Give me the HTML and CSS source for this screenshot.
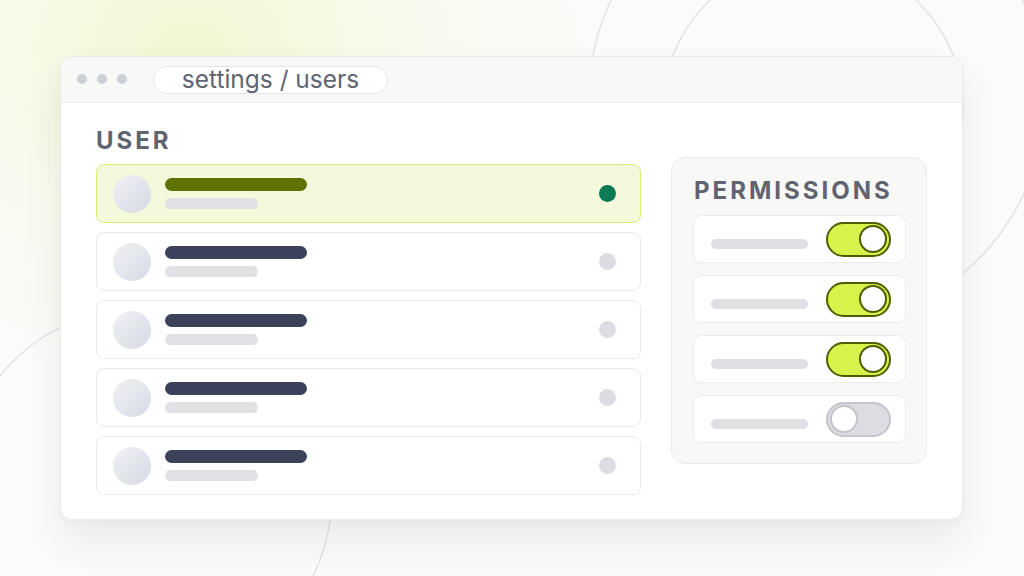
FILE: index.html
```html
<!DOCTYPE html>
<html>
<head>
<meta charset="utf-8">
<link rel="stylesheet" href="styles.css">
</head>
<body>
<svg class="deco" width="1024" height="576" viewBox="0 0 1024 576">
  <circle cx="817" cy="98" r="228" fill="none" stroke="#e3e3e3" stroke-width="1.5"/>
  <circle cx="813" cy="109" r="150" fill="none" stroke="#e3e3e3" stroke-width="1.5"/>
  <circle cx="145" cy="494" r="187" fill="none" stroke="#e3e3e3" stroke-width="1.5"/>
</svg>
<div class="window">
  <div class="titlebar">
    <div class="dots"><span class="dot"></span><span class="dot"></span><span class="dot"></span></div>
    <div class="address">settings / users</div>
  </div>
  <div class="content">
    <section class="users">
      <h2 class="heading">USER</h2>
      <div class="user-list">
        <div class="user-row selected">
          <div class="avatar"></div>
          <div class="lines"><div class="name-bar"></div><div class="sub-bar"></div></div>
          <div class="status"></div>
        </div>
        <div class="user-row">
          <div class="avatar"></div>
          <div class="lines"><div class="name-bar"></div><div class="sub-bar"></div></div>
          <div class="status"></div>
        </div>
        <div class="user-row">
          <div class="avatar"></div>
          <div class="lines"><div class="name-bar"></div><div class="sub-bar"></div></div>
          <div class="status"></div>
        </div>
        <div class="user-row">
          <div class="avatar"></div>
          <div class="lines"><div class="name-bar"></div><div class="sub-bar"></div></div>
          <div class="status"></div>
        </div>
        <div class="user-row">
          <div class="avatar"></div>
          <div class="lines"><div class="name-bar"></div><div class="sub-bar"></div></div>
          <div class="status"></div>
        </div>
      </div>
    </section>
    <section class="permissions">
      <h2 class="heading">PERMISSIONS</h2>
      <div class="perm-list">
        <div class="perm-row"><div class="perm-bar"></div><div class="toggle on"><span class="knob"></span></div></div>
        <div class="perm-row"><div class="perm-bar"></div><div class="toggle on"><span class="knob"></span></div></div>
        <div class="perm-row"><div class="perm-bar"></div><div class="toggle on"><span class="knob"></span></div></div>
        <div class="perm-row"><div class="perm-bar"></div><div class="toggle off"><span class="knob"></span></div></div>
      </div>
    </section>
  </div>
</div>
</body>
</html>
```

FILE: styles.css
```css
* { box-sizing: border-box; }
html, body { margin: 0; padding: 0; }
body {
  width: 1024px;
  height: 576px;
  overflow: hidden;
  position: relative;
  padding: 56px 61px 0 60px;
  font-family: Inter, "Noto Sans", sans-serif;
  background:
    radial-gradient(ellipse 520px 420px at 190px 50px, #f1f8d3 0%, rgba(246,250,232,0.6) 45%, rgba(251,251,251,0) 80%),
    #fbfbfa;
}
.deco {
  position: absolute;
  left: 0;
  top: 0;
  z-index: 0;
}
.window {
  position: relative;
  z-index: 1;
  width: 903px;
  height: 464px;
  background: #ffffff;
  border: 1px solid #ebebea;
  border-radius: 12px;
  box-shadow: 0 22px 40px rgba(40, 40, 30, 0.07), 0 4px 12px rgba(40, 40, 30, 0.03);
  overflow: hidden;
}
.titlebar {
  height: 46px;
  background: #f8f8f6;
  border-bottom: 1px solid #ebebea;
  display: flex;
  align-items: center;
  padding-left: 16px;
}
.dots { display: flex; gap: 10px; margin-right: 26px; margin-top: -2px; }
.dot { width: 10px; height: 10px; border-radius: 50%; background: #cdcfd6; }
.address {
  width: 235px;
  height: 28px;
  border: 1px solid #e6e6e6;
  border-radius: 14px;
  background: #ffffff;
  display: flex;
  align-items: center;
  justify-content: center;
  font-size: 24.5px;
  color: #5f6470;
  line-height: 1;
  padding-bottom: 1px;
}
.content {
  display: grid;
  grid-template-columns: 545px 256px;
  column-gap: 30px;
  align-items: start;
  padding: 24px 35px 0 35px;
}
.heading {
  margin: 0;
  font-size: 24px;
  line-height: 28px;
  font-weight: 700;
  letter-spacing: 3px;
  color: #5f6470;
}
.users .heading { margin-bottom: 9px; }
.user-list { display: flex; flex-direction: column; gap: 9px; }
.user-row {
  height: 59px;
  border: 1px solid #e9e9e9;
  border-radius: 8px;
  background: #ffffff;
  display: flex;
  align-items: center;
  padding: 0 24px 0 16px;
}
.user-row.selected {
  background: #f3f9da;
  border-color: #d6ef76;
}
.avatar {
  width: 38px;
  height: 38px;
  border-radius: 50%;
  background: linear-gradient(135deg, #f0f1f4 0%, #e3e6ec 50%, #d5d9e2 100%);
  flex: none;
}
.lines {
  margin-left: 14px;
  display: flex;
  flex-direction: column;
  gap: 7px;
  flex: 1;
}
.name-bar {
  width: 142px;
  height: 13px;
  border-radius: 7px;
  background: #3b4259;
}
.selected .name-bar { background: #5f7300; }
.sub-bar {
  width: 93px;
  height: 11px;
  border-radius: 6px;
  background: #e0e1e5;
}
.status {
  width: 17px;
  height: 17px;
  border-radius: 50%;
  background: #dcdde2;
  flex: none;
}
.selected .status { background: #0c7a52; }
.permissions {
  margin-top: 30px;
  background: #f8f8f6;
  border: 1px solid #ebebea;
  border-radius: 14px;
  padding: 19px 20px 20px 21px;
}
.permissions .heading { margin-bottom: 10px; margin-left: 1px; }
.perm-list { display: flex; flex-direction: column; gap: 12px; }
.perm-row {
  height: 48px;
  background: #ffffff;
  border: 1px solid #ebebea;
  border-radius: 8px;
  display: flex;
  align-items: center;
  justify-content: space-between;
  padding: 0 14px 0 17px;
}
.perm-bar {
  width: 97px;
  height: 10px;
  border-radius: 5px;
  background: #dfe0e4;
  margin-top: 9px;
}
.toggle {
  width: 65px;
  height: 35px;
  border-radius: 18px;
  border: 2px solid #4f5d00;
  background: #d6f24b;
  display: flex;
  align-items: center;
  padding: 0 2px;
}
.toggle.on { justify-content: flex-end; }
.toggle.off {
  justify-content: flex-start;
  background: #dcdde2;
  border-color: #c3c5cd;
}
.knob {
  width: 28px;
  height: 28px;
  border-radius: 50%;
  background: #ffffff;
  border: 2px solid #4f5d00;
}
.toggle.off .knob { border-color: #c3c5cd; }
```
